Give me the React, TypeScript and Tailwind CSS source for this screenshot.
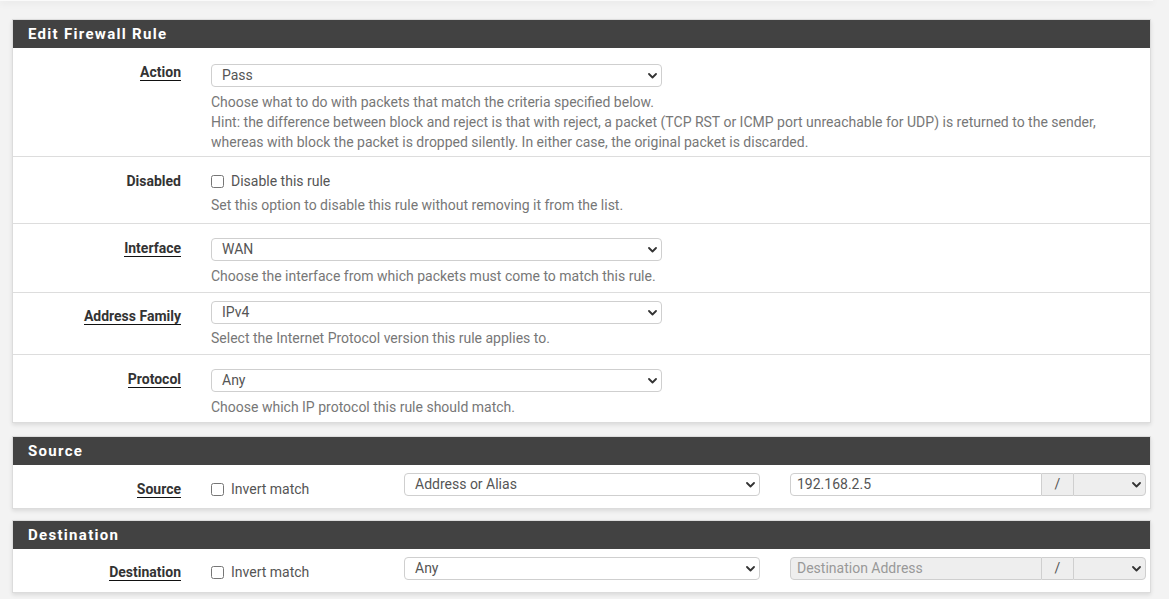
import React from "react";

function Chevron() {
  return (
    <svg width="9" height="6" viewBox="0 0 9 6" className="shrink-0">
      <path d="M1 1 L4.5 4.5 L8 1" fill="none" stroke="#333" strokeWidth="1.8" strokeLinecap="round" strokeLinejoin="round" />
    </svg>
  );
}

function Select({ value, className = "" }: { value: string; className?: string }) {
  return (
    <div
      className={`flex h-[23px] items-center justify-between rounded-[4px] border border-[#cfcfcf] bg-white pl-[10px] pr-[4px] text-[14px] text-[#555] ${className}`}
    >
      <span>{value}</span>
      <Chevron />
    </div>
  );
}

function Label({ text, underline = true, pt = "pt-[14px]" }: { text: string; underline?: boolean; pt?: string }) {
  return (
    <div className={`w-[183px] shrink-0 pr-[15px] text-right text-[14px] font-bold leading-[20px] text-[#333] ${pt}`}>
      <span className={underline ? "border-b border-[#111]" : ""}>{text}</span>
    </div>
  );
}

function Help({ children, mt = "mt-[5px]" }: { children: React.ReactNode; mt?: string }) {
  return <div className={`${mt} text-[14px] leading-[20px] text-[#777]`}>{children}</div>;
}

function Check({ label }: { label: string }) {
  return (
    <label className="flex h-[20px] items-center gap-[7px] text-[14px] text-[#555]">
      <input type="checkbox" className="m-0 h-[13px] w-[13px]" />
      <span>{label}</span>
    </label>
  );
}

function PanelHeader({ title }: { title: string }) {
  return (
    <div className="flex h-[28px] items-center bg-[#424242] px-[15px] text-[15px] font-bold tracking-[1.3px] text-white">
      {title}
    </div>
  );
}

function AddrGroup({ value, placeholder, disabled }: { value?: string; placeholder?: string; disabled?: boolean }) {
  return (
    <div className="flex h-[23px] w-[356px] text-[14px]">
      <div
        className={`flex flex-1 items-center rounded-l-[4px] border border-[#cfcfcf] pl-[6px] ${
          disabled ? "bg-[#eee] text-[#999]" : "bg-white text-[#555]"
        }`}
      >
        {value ?? placeholder}
      </div>
      <div className="flex w-[31px] items-center justify-center border-y border-[#cfcfcf] bg-[#eee] text-[#555]">/</div>
      <div className="flex w-[73px] items-center justify-end rounded-r-[4px] border border-[#cfcfcf] bg-[#eee] pr-[4px]">
        <Chevron />
      </div>
    </div>
  );
}

export default function App() {
  return (
    <div className="h-[599px] w-[1169px] overflow-hidden bg-[#f3f3f3] [font-family:Roboto,sans-serif]">
      <div className="h-[1px] w-[1153px] bg-[#fafafa] shadow-[0_1px_7px_rgba(0,0,0,0.22)]" />

      <div className="pl-[12px] pr-[18px]">
        {/* Edit Firewall Rule */}
        <div className="mt-[18px] border border-[#dcdcdc] bg-white shadow-[0_2px_4px_rgba(0,0,0,0.1)]">
          <PanelHeader title="Edit Firewall Rule" />

          <div className="flex border-b border-[#ddd]">
            <Label text="Action" />
            <div className="flex-1 pl-[15px] pr-[15px] pt-[16px] pb-[4px]">
              <Select value="Pass" className="w-[451px]" />
              <Help>
                Choose what to do with packets that match the criteria specified below.
                <br />
                Hint: the difference between block and reject is that with reject, a packet (TCP RST or ICMP port unreachable for UDP) is returned to the sender,
                <br />
                whereas with block the packet is dropped silently. In either case, the original packet is discarded.
              </Help>
            </div>
          </div>

          <div className="flex border-b border-[#ddd]">
            <Label text="Disabled" underline={false} />
            <div className="flex-1 pl-[15px] pr-[15px] pt-[14px] pb-[8px]">
              <Check label="Disable this rule" />
              <Help mt="mt-[4px]">Set this option to disable this rule without removing it from the list.</Help>
            </div>
          </div>

          <div className="flex border-b border-[#ddd]">
            <Label text="Interface" />
            <div className="flex-1 pl-[15px] pr-[15px] pt-[14px] pb-[6px]">
              <Select value="WAN" className="w-[451px]" />
              <Help>Choose the interface from which packets must come to match this rule.</Help>
            </div>
          </div>

          <div className="flex border-b border-[#ddd]">
            <Label text="Address Family" pt="pt-[13px]" />
            <div className="flex-1 pl-[15px] pr-[15px] pt-[8px] pb-[6px]">
              <Select value="IPv4" className="w-[451px]" />
              <Help mt="mt-[4px]">Select the Internet Protocol version this rule applies to.</Help>
            </div>
          </div>

          <div className="flex">
            <Label text="Protocol" />
            <div className="flex-1 pl-[15px] pr-[15px] pt-[14px] pb-[5px]">
              <Select value="Any" className="w-[451px]" />
              <Help>Choose which IP protocol this rule should match.</Help>
            </div>
          </div>
        </div>

        {/* Source */}
        <div className="mt-[13px] border border-[#dcdcdc] bg-white shadow-[0_2px_4px_rgba(0,0,0,0.1)]">
          <PanelHeader title="Source" />
          <div className="flex h-[43px] items-start">
            <Label text="Source" pt="pt-[14px]" />
            <div className="w-[178px] shrink-0 pl-[15px] pt-[14px]">
              <Check label="Invert match" />
            </div>
            <div className="w-[386px] shrink-0 pl-[30px] pt-[8px]">
              <Select value="Address or Alias" className="w-[356px]" />
            </div>
            <div className="shrink-0 pl-[30px] pt-[8px]">
              <AddrGroup value="192.168.2.5" />
            </div>
          </div>
        </div>

        {/* Destination */}
        <div className="mt-[11px] border border-[#dcdcdc] bg-white shadow-[0_2px_4px_rgba(0,0,0,0.1)]">
          <PanelHeader title="Destination" />
          <div className="flex h-[43px] items-start">
            <Label text="Destination" pt="pt-[13px]" />
            <div className="w-[178px] shrink-0 pl-[15px] pt-[13px]">
              <Check label="Invert match" />
            </div>
            <div className="w-[386px] shrink-0 pl-[30px] pt-[8px]">
              <Select value="Any" className="w-[356px]" />
            </div>
            <div className="shrink-0 pl-[30px] pt-[8px]">
              <AddrGroup placeholder="Destination Address" disabled />
            </div>
          </div>
        </div>
      </div>
    </div>
  );
}
